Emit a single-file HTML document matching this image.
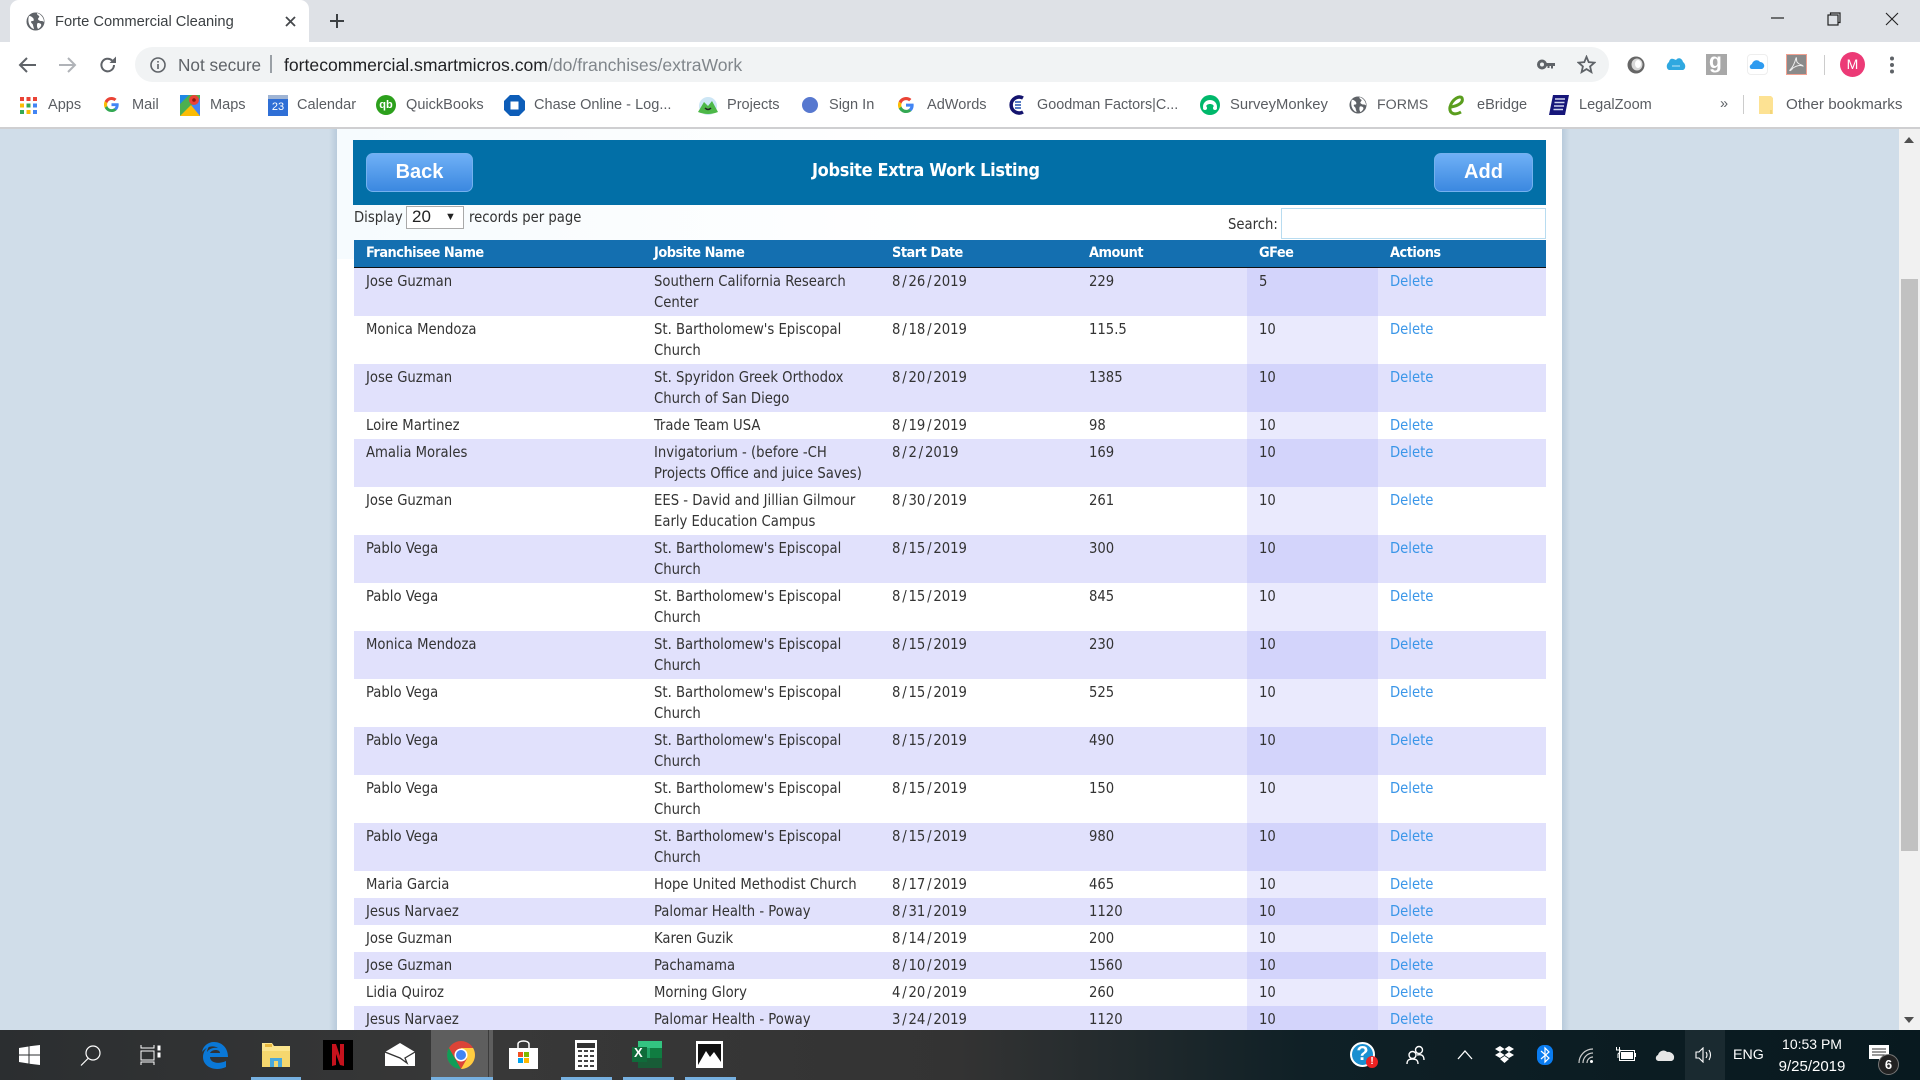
<!DOCTYPE html>
<html><head><meta charset="utf-8"><title>Forte Commercial Cleaning</title>
<style>
html,body{margin:0;padding:0;width:1920px;height:1080px;overflow:hidden;background:#d0dde9}
body{position:relative;font-family:"Liberation Sans",sans-serif}
.a{position:absolute}
svg{position:absolute;display:block}
.t{position:absolute;white-space:nowrap;line-height:20px}
.bm{font-size:14.55px;color:#5a5d62;top:95px}
.pg{font-family:"DejaVu Sans Condensed","DejaVu Sans",sans-serif;font-stretch:condensed}
table{position:absolute;left:354px;top:240px;width:1192px;border-collapse:collapse;table-layout:fixed;font-family:"DejaVu Sans Condensed","DejaVu Sans",sans-serif;font-stretch:condensed;font-size:14.7px;line-height:21px;color:#333}
th{background:#146fb0;color:#fff;text-align:left;font-weight:bold;height:27px;padding:1px 0 0 12px;border-bottom:1px solid #111;font-size:14.4px;letter-spacing:-.5px;box-sizing:border-box}
td{padding:3px 6px 3px 12px;vertical-align:top;text-align:left}
td i{font-style:normal;margin:0 1.8px}
tr.o td{background:#e1e1fc}
tr.e td{background:#fff}
tr.o td.g{background:#d3d4fb}
tr.e td.g{background:#eaeafd}
td a{color:#3a96e8;text-decoration:none}
.btn{position:absolute;top:153px;height:37px;border:1px solid #74b1ee;border-radius:7px;background:linear-gradient(#6fb0f6,#3b88e0);color:#fff;font-weight:bold;font-size:20px;line-height:37px;text-align:center;font-family:"Liberation Sans",sans-serif}
</style></head>
<body>

<!-- page -->
<div class="a" style="left:0;top:129px;width:1899px;height:901px;background:#d0dde9"></div>
<div class="a" style="left:329px;top:129px;width:8px;height:901px;background:linear-gradient(90deg,#d0dde9,#b9cbdb)"></div>
<div class="a" style="left:1562px;top:129px;width:8px;height:901px;background:linear-gradient(90deg,#b9cbdb,#d0dde9)"></div>
<div class="a" style="left:337px;top:129px;width:1225px;height:901px;background:#fff"></div>
<div class="a" style="left:337px;top:129px;width:600px;height:130px;background:linear-gradient(90deg,#f6fbfe,#fff)"></div>

<div class="a" style="left:353px;top:140px;width:1193px;height:65px;background:#026fa7"></div>
<div class="btn" style="left:366px;width:105px">Back</div>
<div class="btn" style="left:1434px;width:97px">Add</div>
<div class="t pg" style="left:812px;top:161px;color:#fff;font-weight:bold;font-size:18px;letter-spacing:-.35px">Jobsite Extra Work Listing</div>

<div class="t pg" style="left:354px;top:208px;font-size:14.7px;color:#333">Display</div>
<div class="a" style="left:406px;top:206px;width:56px;height:21px;border:1px solid #a9a9a9;background:#fff"></div>
<div class="t" style="left:412px;top:207px;font-size:17px;color:#222">20</div>
<div class="t" style="left:445px;top:207px;font-size:11px;color:#222">▼</div>
<div class="t pg" style="left:469px;top:208px;font-size:14.7px;color:#333">records per page</div>
<div class="t pg" style="left:1228px;top:215px;font-size:14.7px;color:#333">Search:</div>
<div class="a" style="left:1281px;top:208px;width:263px;height:29px;border:1px solid #b8dcf0;background:#fff"></div>

<table>
<colgroup><col style="width:288px"><col style="width:238px"><col style="width:197px"><col style="width:170px"><col style="width:131px"><col></colgroup>
<tr><th>Franchisee Name</th><th>Jobsite Name</th><th>Start Date</th><th>Amount</th><th>GFee</th><th>Actions</th></tr>
<tr class="o"><td>Jose Guzman</td><td>Southern California Research Center</td><td>8<i>/</i>26<i>/</i>2019</td><td>229</td><td class="g">5</td><td><a>Delete</a></td></tr>
<tr class="e"><td>Monica Mendoza</td><td>St. Bartholomew's Episcopal Church</td><td>8<i>/</i>18<i>/</i>2019</td><td>115.5</td><td class="g">10</td><td><a>Delete</a></td></tr>
<tr class="o"><td>Jose Guzman</td><td>St. Spyridon Greek Orthodox Church of San Diego</td><td>8<i>/</i>20<i>/</i>2019</td><td>1385</td><td class="g">10</td><td><a>Delete</a></td></tr>
<tr class="e"><td>Loire Martinez</td><td>Trade Team USA</td><td>8<i>/</i>19<i>/</i>2019</td><td>98</td><td class="g">10</td><td><a>Delete</a></td></tr>
<tr class="o"><td>Amalia Morales</td><td>Invigatorium - (before -CH Projects Office and juice Saves)</td><td>8<i>/</i>2<i>/</i>2019</td><td>169</td><td class="g">10</td><td><a>Delete</a></td></tr>
<tr class="e"><td>Jose Guzman</td><td>EES - David and Jillian Gilmour Early Education Campus</td><td>8<i>/</i>30<i>/</i>2019</td><td>261</td><td class="g">10</td><td><a>Delete</a></td></tr>
<tr class="o"><td>Pablo Vega</td><td>St. Bartholomew's Episcopal Church</td><td>8<i>/</i>15<i>/</i>2019</td><td>300</td><td class="g">10</td><td><a>Delete</a></td></tr>
<tr class="e"><td>Pablo Vega</td><td>St. Bartholomew's Episcopal Church</td><td>8<i>/</i>15<i>/</i>2019</td><td>845</td><td class="g">10</td><td><a>Delete</a></td></tr>
<tr class="o"><td>Monica Mendoza</td><td>St. Bartholomew's Episcopal Church</td><td>8<i>/</i>15<i>/</i>2019</td><td>230</td><td class="g">10</td><td><a>Delete</a></td></tr>
<tr class="e"><td>Pablo Vega</td><td>St. Bartholomew's Episcopal Church</td><td>8<i>/</i>15<i>/</i>2019</td><td>525</td><td class="g">10</td><td><a>Delete</a></td></tr>
<tr class="o"><td>Pablo Vega</td><td>St. Bartholomew's Episcopal Church</td><td>8<i>/</i>15<i>/</i>2019</td><td>490</td><td class="g">10</td><td><a>Delete</a></td></tr>
<tr class="e"><td>Pablo Vega</td><td>St. Bartholomew's Episcopal Church</td><td>8<i>/</i>15<i>/</i>2019</td><td>150</td><td class="g">10</td><td><a>Delete</a></td></tr>
<tr class="o"><td>Pablo Vega</td><td>St. Bartholomew's Episcopal Church</td><td>8<i>/</i>15<i>/</i>2019</td><td>980</td><td class="g">10</td><td><a>Delete</a></td></tr>
<tr class="e"><td>Maria Garcia</td><td>Hope United Methodist Church</td><td>8<i>/</i>17<i>/</i>2019</td><td>465</td><td class="g">10</td><td><a>Delete</a></td></tr>
<tr class="o"><td>Jesus Narvaez</td><td>Palomar Health - Poway</td><td>8<i>/</i>31<i>/</i>2019</td><td>1120</td><td class="g">10</td><td><a>Delete</a></td></tr>
<tr class="e"><td>Jose Guzman</td><td>Karen Guzik</td><td>8<i>/</i>14<i>/</i>2019</td><td>200</td><td class="g">10</td><td><a>Delete</a></td></tr>
<tr class="o"><td>Jose Guzman</td><td>Pachamama</td><td>8<i>/</i>10<i>/</i>2019</td><td>1560</td><td class="g">10</td><td><a>Delete</a></td></tr>
<tr class="e"><td>Lidia Quiroz</td><td>Morning Glory</td><td>4<i>/</i>20<i>/</i>2019</td><td>260</td><td class="g">10</td><td><a>Delete</a></td></tr>
<tr class="o"><td>Jesus Narvaez</td><td>Palomar Health - Poway</td><td>3<i>/</i>24<i>/</i>2019</td><td>1120</td><td class="g">10</td><td><a>Delete</a></td></tr>
</table>

<!-- scrollbar -->
<div class="a" style="left:1899px;top:129px;width:21px;height:901px;background:#f1f1f1"></div>
<div class="a" style="left:1901px;top:279px;width:17px;height:572px;background:#c1c1c1"></div>
<svg style="left:1904px;top:137px" width="10" height="6"><path d="M0 6L5 0L10 6Z" fill="#505050"/></svg>
<svg style="left:1904px;top:1017px" width="10" height="6"><path d="M0 0L5 6L10 0Z" fill="#505050"/></svg>

<!-- chrome -->
<div class="a" style="left:0;top:0;width:1920px;height:42px;background:#dee1e6"></div>
<div class="a" style="left:10px;top:0;width:299px;height:42px;background:#fff;border-radius:9px 9px 0 0"></div>
<div class="a" style="left:0;top:42px;width:1920px;height:85px;background:#fff"></div>
<div class="a" style="left:0;top:127px;width:1920px;height:2px;background:#cfcfd1"></div>

<svg style="left:26px;top:12px" width="19" height="19" viewBox="0 0 19 19"><circle cx="9.5" cy="9.5" r="9" fill="#5f6368"/><path d="M3 4c2 0 3 1 4 2s1 3 0 3-2 0-2 1 2 2 2 3 1 3 1 4C4 16 1 10 3 4zM11 1c0 2 1 2 2 3s-1 2-1 3 2 2 3 2 2 0 3 1c0-4-3-8-7-9zM12 11c2 0 4 1 3 3s-3 3-3 3-1-2-1-3 0-3 1-3z" fill="#fff"/></svg>
<div class="t" style="left:55px;top:11px;font-size:14.7px;color:#3c4043;margin-top:1px">Forte Commercial Cleaning</div>
<svg style="left:285px;top:16px" width="11" height="11"><path d="M1 1L10 10M10 1L1 10" stroke="#45484c" stroke-width="1.8"/></svg>
<svg style="left:329px;top:13px" width="16" height="16"><path d="M8 1V15M1 8H15" stroke="#3c4043" stroke-width="2"/></svg>
<svg style="left:1771px;top:17px" width="13" height="2"><path d="M0 1H13" stroke="#222" stroke-width="1.2"/></svg>
<svg style="left:1827px;top:12px" width="14" height="14" fill="none" stroke="#222" stroke-width="1.2"><rect x="1" y="3" width="10" height="10"/><path d="M3.5 3V1H13V10.5H11"/></svg>
<svg style="left:1885px;top:12px" width="14" height="14"><path d="M1 1L13 13M13 1L1 13" stroke="#222" stroke-width="1.1"/></svg>

<svg style="left:18px;top:56px" width="18" height="18" fill="none" stroke="#5f6368" stroke-width="2"><path d="M18 9H2M9 2L2 9L9 16"/></svg>
<svg style="left:59px;top:56px" width="18" height="18" fill="none" stroke="#b0b3b8" stroke-width="2"><path d="M0 9H16M9 2L16 9L9 16"/></svg>
<svg style="left:99px;top:56px" width="18" height="18" viewBox="0 0 18 18"><path d="M15 9a6.3 6.3 0 1 1-1.9-4.5" fill="none" stroke="#5f6368" stroke-width="2"/><path d="M10.5 7H17V0.5Z" fill="#5f6368"/></svg>

<div class="a" style="left:135px;top:47px;width:1474px;height:35px;border-radius:18px;background:#f1f3f4"></div>
<svg style="left:150px;top:57px" width="16" height="16" fill="none" stroke="#5f6368" stroke-width="1.6"><circle cx="8" cy="8" r="7"/><path d="M8 7V12M8 4V5.6"/></svg>
<div class="t" style="left:178px;top:55px;font-size:17.2px;color:#5f6368">Not secure</div>
<div class="a" style="left:270px;top:55px;width:2px;height:18px;background:#9aa0a6"></div>
<div class="t" style="left:284px;top:55px;font-size:17.6px;color:#80868b"><span style="color:#202124">fortecommercial.smartmicros.com</span>/do/franchises/extraWork</div>
<svg style="left:1537px;top:58px" width="18" height="13" viewBox="0 0 18 13"><circle cx="5" cy="6.5" r="3.5" fill="none" stroke="#5f6368" stroke-width="3"/><path d="M8 5H18V8H16V10.5H14V8H12.5V10H10.5V8H8Z" fill="#5f6368"/></svg>
<svg style="left:1577px;top:55px" width="19" height="19" viewBox="0 0 19 19"><path d="M9.5 1.8L11.7 7.1L17.5 7.6L13.1 11.4L14.4 17.1L9.5 14.1L4.6 17.1L5.9 11.4L1.5 7.6L7.3 7.1Z" fill="none" stroke="#5f6368" stroke-width="1.8"/></svg>

<svg style="left:1627px;top:56px" width="18" height="18" viewBox="0 0 18 18"><circle cx="9" cy="9" r="8.5" fill="#666"/><ellipse cx="10" cy="8.5" rx="5.5" ry="6" fill="#d8d8d8"/><ellipse cx="11" cy="8" rx="3" ry="4" fill="#fff"/></svg>
<svg style="left:1666px;top:56px" width="20" height="17" viewBox="0 0 20 17"><path d="M3 6C4 1 8 3 10 4 12 1 16 2 17 6 20 8 20 13 17 14H3C0 13 0 8 3 6Z" fill="#2fa8e0"/><path d="M6 10H14" stroke="#bfe6f7"/></svg>
<div class="a" style="left:1706px;top:54px;width:21px;height:21px;background:#a8a8a8"></div>
<div class="t" style="left:1709px;top:50px;font-size:21px;line-height:24px;font-weight:bold;color:#fff">g</div>
<div class="a" style="left:1747px;top:54px;width:19px;height:19px;border:1px solid #eee;border-radius:4px;background:#fff"></div>
<svg style="left:1749px;top:59px" width="16" height="10" viewBox="0 0 16 10"><path d="M3 10C0 10 0 6 3 5 4 1 9 0 11 3 14 3 16 6 15 8 14 10 13 10 12 10Z" fill="#2e9bf0"/></svg>
<div class="a" style="left:1786px;top:54px;width:19px;height:19px;border:1px solid #f0a090;background:#8a8a8a"></div>
<svg style="left:1788px;top:56px" width="17" height="17" viewBox="0 0 17 17" fill="none" stroke="#eee" stroke-width="1"><path d="M8 2C7 6 5 11 2 14 1 15 3 15 5 12 8 10 12 9 15 10 15 9 11 9 9 6 8 4 9 1 8 2Z"/></svg>
<div class="a" style="left:1824px;top:55px;width:1px;height:20px;background:#ccc"></div>
<div class="a" style="left:1840px;top:52px;width:25px;height:25px;border-radius:50%;background:#ec3a76;color:#fff;font-size:14px;line-height:25px;text-align:center">M</div>
<svg style="left:1890px;top:56px" width="4" height="18" fill="#5f6368"><circle cx="2" cy="2.5" r="2"/><circle cx="2" cy="9" r="2"/><circle cx="2" cy="15.5" r="2"/></svg>

<!-- bookmarks -->
<svg style="left:20px;top:97px" width="17" height="17"><g><rect width="4" height="4" fill="#ea4335"/><rect x="6.5" width="4" height="4" fill="#ea4335"/><rect x="13" width="4" height="4" fill="#ea4335"/><rect y="6.5" width="4" height="4" fill="#fbbc05"/><rect x="6.5" y="6.5" width="4" height="4" fill="#34a853"/><rect x="13" y="6.5" width="4" height="4" fill="#4285f4"/><rect y="13" width="4" height="4" fill="#34a853"/><rect x="6.5" y="13" width="4" height="4" fill="#fbbc05"/><rect x="13" y="13" width="4" height="4" fill="#4285f4"/></g></svg>
<div class="t bm" style="left:48px">Apps</div>
<svg style="left:104px;top:97px" width="15" height="15" viewBox="0 0 24 24"><path d="M23.5 12.3c0-.8-.1-1.600-.2-2.300H12v4.500h6.500c-.3 1.500-1.100 2.700-2.400 3.600v3h3.900c2.300-2.100 3.500-5.200 3.500-8.800z" fill="#4285f4"/><path d="M12 24c3.200 0 6-1.100 8-2.900l-3.900-3c-1.100.7-2.500 1.200-4.100 1.200-3.100 0-5.800-2.100-6.700-5H1.200v3.100C3.200 21.300 7.300 24 12 24z" fill="#34a853"/><path d="M5.300 14.300c-.5-1.500-.5-3.100 0-4.600V6.600H1.200c-1.700 3.400-1.700 7.400 0 10.800z" fill="#fbbc05"/><path d="M12 4.700c1.800 0 3.400.6 4.600 1.800l3.500-3.500C18 1.100 15.200 0 12 0 7.300 0 3.200 2.700 1.200 6.600l4.100 3.100c1-2.900 3.600-5 6.700-5z" fill="#ea4335"/></svg>
<div class="t bm" style="left:132px">Mail</div>
<svg style="left:180px;top:95px" width="20" height="21" viewBox="0 0 20 21"><rect width="20" height="21" fill="#4caf50"/><path d="M0 21L20 3V21Z" fill="#4285f4"/><path d="M0 21L11 10L20 21Z" fill="#fbbc05"/><path d="M0 0H9L0 9Z" fill="#1e88e5"/><circle cx="14" cy="5" r="5" fill="#ea4335"/><circle cx="14" cy="5" r="1.800" fill="#8b1a10"/></svg>
<div class="t bm" style="left:210px">Maps</div>
<div class="a" style="left:268px;top:97px;width:20px;height:19px;background:#2f6fd6;color:#fff;font-size:11px;line-height:21px;text-align:center">23</div>
<div class="a" style="left:268px;top:95px;width:20px;height:4px;background:#9fb4d4"></div>
<div class="t bm" style="left:297px">Calendar</div>
<div class="a" style="left:376px;top:95px;width:20px;height:20px;border-radius:50%;background:#2ca01c;color:#fff;font-size:11px;font-weight:bold;line-height:20px;text-align:center">qb</div>
<div class="t bm" style="left:406px">QuickBooks</div>
<svg style="left:504px;top:95px" width="21" height="21" viewBox="0 0 21 21"><path d="M6 0H15L21 6V15L15 21H6L0 15V6Z" fill="#0d5db8"/><rect x="6.500" y="6.500" width="8" height="8" fill="#fff"/></svg>
<div class="t bm" style="left:534px">Chase Online - Log...</div>
<svg style="left:697px;top:96px" width="22" height="19" viewBox="0 0 22 19"><circle cx="11" cy="10" r="9" fill="#cde6f5"/><path d="M1 16L7 6L11 10L15 5L21 16Q11 20 1 16Z" fill="#4db848"/><path d="M8 12Q11 15 14 12" stroke="#222" fill="none" stroke-width="1.500"/></svg>
<div class="t bm" style="left:727px">Projects</div>
<div class="a" style="left:802px;top:97px;width:16px;height:16px;border-radius:50%;background:#5778cf"></div>
<div class="t bm" style="left:829px">Sign In</div>
<svg style="left:898px;top:97px" width="16" height="16" viewBox="0 0 24 24"><path d="M23.5 12.3c0-.8-.1-1.600-.2-2.300H12v4.500h6.500c-.3 1.500-1.100 2.700-2.400 3.600v3h3.900c2.300-2.100 3.500-5.200 3.500-8.800z" fill="#4285f4"/><path d="M12 24c3.200 0 6-1.100 8-2.900l-3.900-3c-1.100.7-2.500 1.200-4.100 1.200-3.100 0-5.800-2.100-6.700-5H1.200v3.100C3.200 21.300 7.300 24 12 24z" fill="#34a853"/><path d="M5.300 14.300c-.5-1.500-.5-3.100 0-4.600V6.600H1.200c-1.700 3.400-1.700 7.400 0 10.800z" fill="#fbbc05"/><path d="M12 4.700c1.800 0 3.400.6 4.600 1.800l3.500-3.500C18 1.100 15.200 0 12 0 7.300 0 3.200 2.700 1.200 6.600l4.100 3.100c1-2.900 3.600-5 6.700-5z" fill="#ea4335"/></svg>
<div class="t bm" style="left:927px">AdWords</div>
<svg style="left:1008px;top:95px" width="18" height="20" viewBox="0 0 18 20"><path d="M15 3A8 8 0 1 0 15 17" fill="none" stroke="#14146e" stroke-width="3.500"/><path d="M7 7H13M7 10H13M7 13H13" stroke="#2050b0" stroke-width="1.500"/></svg>
<div class="t bm" style="left:1037px;font-size:14.4px">Goodman Factors|C...</div>
<svg style="left:1200px;top:95px" width="20" height="20" viewBox="0 0 20 20"><circle cx="10" cy="10" r="10" fill="#00b86b"/><path d="M3 12C3 7 7 5 10 5S17 7 17 12H14C14 10 12 9 10 9S6 10 6 12Z" fill="#fff"/><circle cx="5" cy="13" r="2" fill="#fff"/><circle cx="15" cy="13" r="2" fill="#fff"/></svg>
<div class="t bm" style="left:1230px;font-size:14.8px">SurveyMonkey</div>
<svg style="left:1349px;top:96px" width="18" height="18" viewBox="0 0 19 19"><circle cx="9.500" cy="9.500" r="9" fill="#5f6368"/><path d="M3 4c2 0 3 1 4 2s1 3 0 3-2 0-2 1 2 2 2 3 1 3 1 4C4 16 1 10 3 4zM11 1c0 2 1 2 2 3s-1 2-1 3 2 2 3 2 2 0 3 1c0-4-3-8-7-9zM12 11c2 0 4 1 3 3s-3 3-3 3-1-2-1-3 0-3 1-3z" fill="#fff"/></svg>
<div class="t bm" style="left:1377px;font-size:14.2px">FORMS</div>
<svg style="left:1448px;top:95px" width="19" height="21" viewBox="0 0 19 21"><path d="M3 12C9 11 16 8 14 3 12 0 4 4 2 12 1 18 6 21 13 17" fill="none" stroke="#5a9e1e" stroke-width="3"/></svg>
<div class="t bm" style="left:1477px">eBridge</div>
<svg style="left:1549px;top:95px" width="20" height="20" viewBox="0 0 20 20"><path d="M4 0H20L16 20H0Z" fill="#16167a"/><path d="M6 4H16M5.500 7.500H15.500M5 11H15M4.500 14.500H14" stroke="#cfd4ee" stroke-width="1.500"/></svg>
<div class="t bm" style="left:1579px">LegalZoom</div>
<div class="t bm" style="left:1720px;top:94px;color:#5f6368">»</div>
<div class="a" style="left:1743px;top:95px;width:1px;height:19px;background:#ccc"></div>
<svg style="left:1758px;top:96px" width="16" height="19" viewBox="0 0 16 19"><path d="M1 0H13L15 2V18H1Z" fill="#fde293"/><path d="M13 14V18" stroke="#e8c860"/></svg>
<div class="t bm" style="left:1786px;font-size:15.2px">Other bookmarks</div>

<!-- taskbar -->
<div class="a" style="left:0;top:1030px;width:1920px;height:50px;background:linear-gradient(90deg,#2b2e30 0,#383838 25%,#333 50%,#0f2026 68%,#08191f 100%)"></div>
<svg style="left:19px;top:1045px" width="21" height="20" viewBox="0 0 21 20" fill="#fff"><path d="M0 3L9.500 1.500V9.500H0ZM10.500 1.300L21 0V9.500H10.500ZM0 10.500H9.500V18.500L0 17ZM10.500 10.500H21V20L10.500 18.700Z"/></svg>
<svg style="left:80px;top:1045px" width="21" height="21" fill="none" stroke="#fff" stroke-width="1.200"><circle cx="13" cy="8" r="7"/><path d="M8 13.500L1 20.500"/></svg>
<svg style="left:140px;top:1045px" width="21" height="20" fill="none" stroke="#fff" stroke-width="1"><path d="M1 0V3H14V0M1 20V17H14V20"/><rect x="1" y="6" width="13" height="9"/><rect x="18" y="1" width="2" height="4" fill="#fff"/><rect x="18" y="8" width="2" height="4" fill="#fff"/></svg>
<svg style="left:201px;top:1042px" width="27" height="27" viewBox="0 0 27 27"><path d="M13 0C21 0 27 6 27 15H9C9 20 16 23 25 19V25C14 30 2 25 2 15 2 10 5 6 9 3 7 6 6 8 6 10 8 7 12 5 17 6 12 3 6 4 1 10 2 4 7 0 13 0ZM9 11H19C19 7 11 7 9 11Z" fill="#0a78d7"/></svg>
<svg style="left:262px;top:1043px" width="28" height="24" viewBox="0 0 28 24"><path d="M0 0H10L12 3H28V24H0Z" fill="#fbe58e"/><rect y="8" width="28" height="16" fill="#f5d76e"/><rect x="3" y="1" width="7" height="3" fill="#e8b83e"/><path d="M8 24V15H20V24H16V18H12V24Z" fill="#4aa9dc"/></svg>
<div class="a" style="left:323px;top:1040px;width:30px;height:30px;background:#000"></div>
<svg style="left:331px;top:1044px" width="14" height="22" viewBox="0 0 14 22"><path d="M1 0H5L9 12V0H13V22L9 21L5 10V21L1 22Z" fill="#c5121d"/></svg>
<svg style="left:385px;top:1043px" width="30" height="23" viewBox="0 0 30 23"><path d="M15 0L30 9V23H0V9Z" fill="#fff"/><path d="M0 9L15 15L22 20L20 15L30 9" fill="none" stroke="#333" stroke-width="1.300"/></svg>
<div class="a" style="left:431px;top:1030px;width:62px;height:50px;background:#5e5e5e"></div>
<div class="a" style="left:488px;top:1030px;width:1px;height:50px;background:#3b3b3b"></div>
<svg style="left:447px;top:1041px" width="28" height="28" viewBox="0 0 28 28"><circle cx="14" cy="14" r="14" fill="#db4437"/><path d="M14 28A14 14 0 0 1 1.900 7L8 17.500L14 28Z" fill="#0f9d58"/><path d="M14 28A14 14 0 0 0 26.100 7H14L20 17.500Z" fill="#ffcd40"/><circle cx="14" cy="14" r="6.500" fill="#fff"/><circle cx="14" cy="14" r="5" fill="#4285f4"/></svg>
<svg style="left:509px;top:1040px" width="29" height="29" viewBox="0 0 29 29"><path d="M0 8H29V29H0Z" fill="#fff"/><path d="M9 9V4C9 0 20 0 20 4V9" fill="none" stroke="#fff" stroke-width="1.500"/><rect x="9" y="12" width="5" height="5" fill="#f25022"/><rect x="15" y="12" width="5" height="5" fill="#7fba00"/><rect x="9" y="18" width="5" height="5" fill="#00a4ef"/><rect x="15" y="18" width="5" height="5" fill="#ffb900"/></svg>
<svg style="left:575px;top:1040px" width="22" height="30" viewBox="0 0 22 30"><rect width="22" height="30" fill="#fff"/><rect x="2" y="3" width="18" height="5" fill="#333"/><path d="M3 11H7M9 11H13M15 11H19M3 16H7M9 16H13M15 16H19M3 21H7M9 21H13M15 21H19M3 26H7M9 26H13M15 26H19" stroke="#444" stroke-width="2"/></svg>
<svg style="left:632px;top:1041px" width="30" height="27" viewBox="0 0 30 27"><rect x="6" width="24" height="27" fill="#21a366"/><rect x="6" width="24" height="7" fill="#33c481"/><rect x="18" y="7" width="12" height="10" fill="#107c41"/><rect x="6" y="17" width="24" height="10" fill="#185c37"/><rect y="6" width="15" height="15" fill="#0f6b3a"/></svg>
<div class="t" style="left:634px;top:1043px;font-size:13px;font-weight:bold;color:#fff">X</div>
<svg style="left:696px;top:1041px" width="27" height="27" viewBox="0 0 27 27"><rect width="27" height="27" fill="#fff"/><rect x="2" y="3" width="23" height="21" fill="#111"/><path d="M2 24L10 10L14 16L18 11L25 21V24Z" fill="#fff"/></svg>
<div class="a" style="left:251px;top:1077px;width:50px;height:3px;background:#76b0e0"></div>
<div class="a" style="left:431px;top:1077px;width:62px;height:3px;background:#76b0e0"></div>
<div class="a" style="left:561px;top:1077px;width:51px;height:3px;background:#76b0e0"></div>
<div class="a" style="left:623px;top:1077px;width:51px;height:3px;background:#76b0e0"></div>
<div class="a" style="left:685px;top:1077px;width:51px;height:3px;background:#76b0e0"></div>

<!-- tray -->
<div class="a" style="left:1350px;top:1042px;width:21px;height:21px;border:2px solid #fff;border-radius:50%;background:#1a8fd0;color:#fff;font-size:20px;font-weight:bold;line-height:21px;text-align:center">?</div>
<div class="a" style="left:1366px;top:1056px;width:12px;height:12px;border-radius:50%;background:#e22;color:#fff;font-size:10px;font-weight:bold;line-height:12px;text-align:center">!</div>
<svg style="left:1406px;top:1045px" width="19" height="20" fill="none" stroke="#fff" stroke-width="1.400"><circle cx="6.500" cy="10" r="3.500"/><path d="M1 19C1 15 3 14 6.500 14S12 15 12 19"/><circle cx="13" cy="5" r="3.500"/><path d="M11 10C15 9 18 10 18 15"/></svg>
<svg style="left:1457px;top:1050px" width="16" height="10" fill="none" stroke="#fff" stroke-width="1.300"><path d="M1 9L8 1L15 9"/></svg>
<svg style="left:1495px;top:1046px" width="19" height="17" viewBox="0 0 19 17" fill="#fff"><path d="M5 0L9.500 3L5 6L0 3ZM14 0L19 3L14 6L9.500 3ZM5 6L9.500 9L5 12L0 9ZM14 6L19 9L14 12L9.500 9ZM5 13L9.500 10L14 13L9.500 17Z"/></svg>
<svg style="left:1537px;top:1045px" width="16" height="20" viewBox="0 0 16 20"><rect width="16" height="20" rx="7" fill="#0a7cf0"/><path d="M4 6L12 13L8 17V3L12 7L4 14" fill="none" stroke="#fff" stroke-width="1.200"/></svg>
<svg style="left:1578px;top:1048px" width="16" height="16" fill="none" stroke="#ccc" stroke-width="1.200"><path d="M1 15A14 14 0 0 1 15 1M5 15A10 10 0 0 1 15 5M9 15A6 6 0 0 1 15 9"/><circle cx="13.500" cy="13.500" r="1.500" fill="#fff" stroke="none"/></svg>
<svg style="left:1615px;top:1047px" width="21" height="15" fill="none" stroke="#fff" stroke-width="1"><rect x="4.500" y="3.500" width="15" height="10"/><rect x="6" y="5" width="12" height="7" fill="#fff" stroke="none"/><rect x="19.500" y="6" width="1.500" height="4" fill="#fff" stroke="none"/><path d="M1.500 0V3M4.500 0V3M1 3H5V5L3 7V11"/></svg>
<svg style="left:1655px;top:1048px" width="20" height="13" viewBox="0 0 20 13" fill="#e6e6e6"><path d="M4 13C0 13 0 8 3 7 4 3 9 1 12 4 16 3 20 7 19 10 19 12 17 13 16 13Z"/></svg>
<div class="a" style="left:1685px;top:1030px;width:40px;height:50px;background:#1a2a30"></div>
<svg style="left:1695px;top:1047px" width="20" height="16" fill="none" stroke="#fff" stroke-width="1.100"><path d="M1 5H4L8 1V15L4 11H1Z"/><path d="M11 5Q13 8 11 11M14 3Q17 8 14 13" /></svg>
<div class="t" style="left:1733px;top:1045px;font-size:14.2px;color:#fff">ENG</div>
<div class="t" style="left:1782px;top:1034px;width:60px;text-align:center;font-size:14px;color:#fff">10:53 PM</div>
<div class="t" style="left:1776px;top:1057px;width:72px;text-align:center;font-size:15px;color:#fff">9/25/2019</div>
<svg style="left:1869px;top:1045px" width="20" height="18" viewBox="0 0 20 18"><path d="M0 0H20V14H13L10 18V14H0Z" fill="#fff"/><path d="M3 4H17M3 7H17M3 10H17" stroke="#333"/></svg>
<div class="a" style="left:1878px;top:1054px;width:19px;height:19px;border:1px solid #777;border-radius:50%;background:#222;color:#fff;font-size:13px;font-weight:bold;line-height:19px;text-align:center">6</div>

</body></html>
